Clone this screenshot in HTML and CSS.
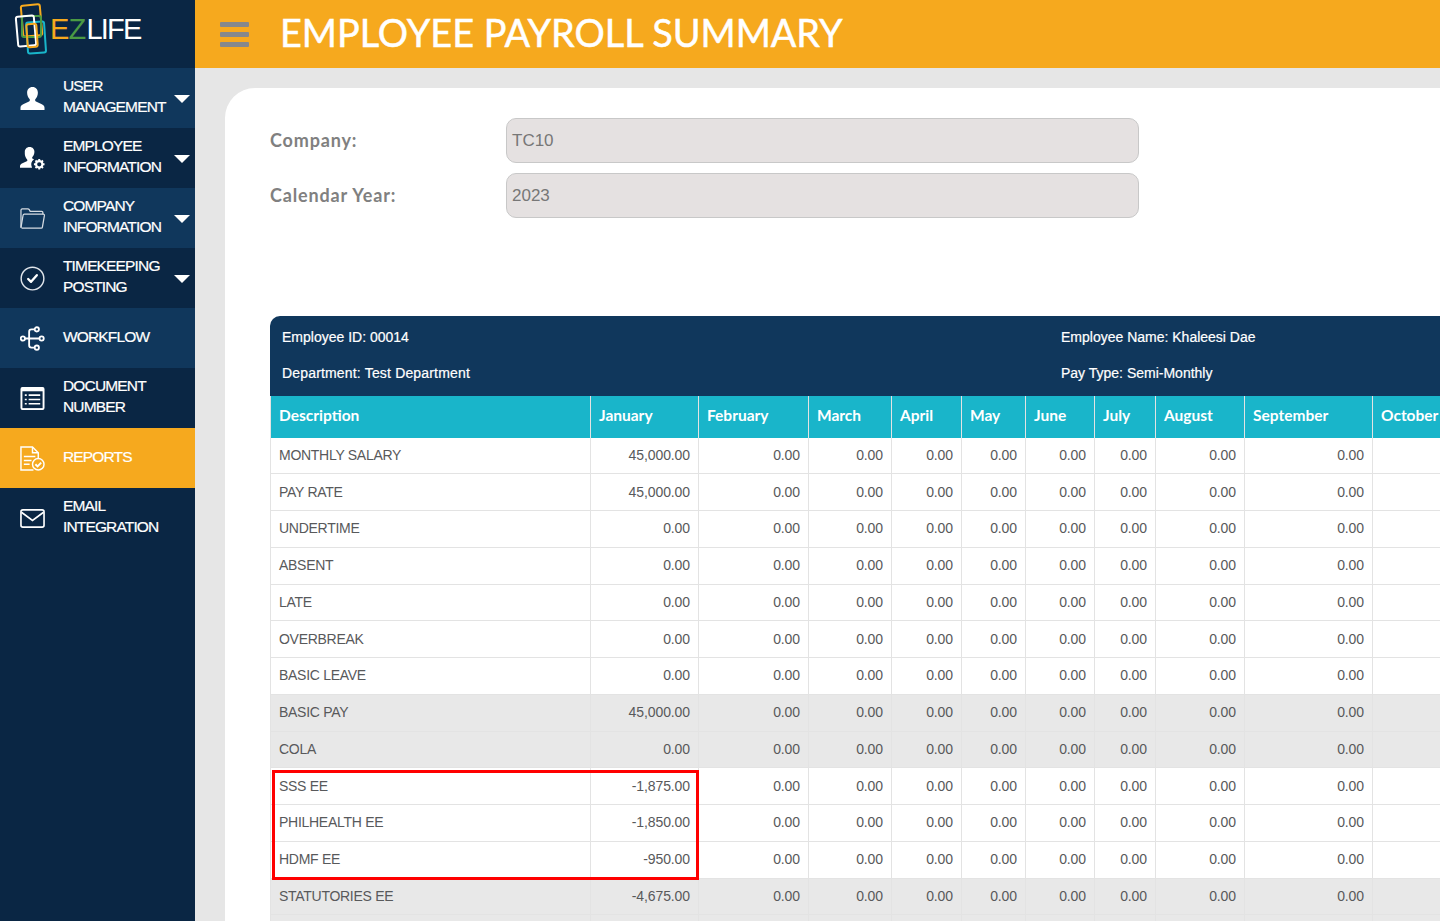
FILE: index.html
```html
<!DOCTYPE html>
<html lang="en">
<head>
<meta charset="utf-8">
<title>Employee Payroll Summary</title>
<link rel="stylesheet" href="styles.css">
</head>
<body>
<aside class="sidebar">
  <div class="brand">
    <svg class="brand-mark" width="46" height="56" viewBox="0 0 46 56" fill="none" stroke-width="2">
      <rect x="21" y="5" width="19" height="31" rx="2" stroke="#f6a91e" transform="rotate(-5 30 20)"/>
      <rect x="26" y="22" width="18" height="31" rx="2" stroke="#19b5ca" transform="rotate(-4 35 37)"/>
      <rect x="21" y="16" width="19" height="21" rx="2" stroke="#4b9a44"/>
      <rect x="16" y="16" width="18" height="30" rx="2" stroke="#ffffff" transform="rotate(-5 25 31)"/>
      <rect x="26" y="24" width="10" height="23" rx="2" stroke="#f6a91e" transform="rotate(-4 31 35)"/>
    </svg>
    <span class="brand-name"><span class="b-e">E</span><span class="b-z">Z</span>LIFE</span>
  </div>
  <nav>
    <a class="nav-item alt">
      <svg class="ico" viewBox="0 0 26 24"><path fill="#fff" d="M13 0c3.600 0 5.600 2.700 5.600 6 0 2.600-1 5-2.500 6.500-.6.700-.5 2 .5 2.500l5.600 2.700c2 .9 3.300 2 3.300 3.800V24H.5v-2.500c0-1.800 1.300-2.900 3.300-3.800L9.400 15c1-.5 1.100-1.800.5-2.500C8.400 11 7.400 8.600 7.400 6c0-3.300 2-6 5.600-6z"/></svg>
      <span class="label">USER MANAGEMENT</span><i class="caret"></i>
    </a>
    <a class="nav-item">
      <svg class="ico" viewBox="0 0 26 24"><path fill="#fff" d="M10 0c3.200 0 5 2.300 5 5 0 2.200-.9 4.200-2.100 5.400-.4.500-.4 1.500.4 1.900l1.300.6a7 7 0 0 0-2.100 8.600H0v-1.700c0-1.400 1-2.200 2.500-2.900l4.500-2c.8-.4.800-1.400.4-1.900C6 11.200 5 9.200 5 7c0-.4 0-1.300 0-2C5 2.300 6.800 0 10 0z"/><circle cx="20" cy="18" r="3.300" fill="none" stroke="#fff" stroke-width="2.200"/><path stroke="#fff" stroke-width="2" d="M20 12.500v2M20 21.500v2M14.500 18h2M23.500 18h2M16.100 14.100l1.400 1.400M22.500 20.500l1.400 1.400M16.100 21.900l1.400-1.400M22.500 15.500l1.400-1.400"/></svg>
      <span class="label">EMPLOYEE INFORMATION</span><i class="caret"></i>
    </a>
    <a class="nav-item alt">
      <svg class="ico" viewBox="0 0 26 24" fill="none" stroke="#d5dbe2" stroke-width="1.300"><path d="M1 21.500V3.500C1 2.700 1.500 2 2.300 2h6c.6 0 1 .3 1.300.8l1 1.700h12c.8 0 1.200.6 1.200 1.300v1.700"/><path d="M1 21.500 3.200 8.600c.1-.7.600-1.100 1.300-1.100h19.700c.8 0 1.300.6 1.200 1.300L23.300 21c-.1.700-.6 1.100-1.300 1.100H1.600"/></svg>
      <span class="label">COMPANY INFORMATION</span><i class="caret"></i>
    </a>
    <a class="nav-item">
      <svg class="ico" viewBox="0 0 26 26" fill="none" stroke="#fff"><circle cx="13" cy="13" r="11.800" stroke="#dfe4ea" stroke-width="1.500"/><path stroke-width="2.400" stroke-linecap="round" stroke-linejoin="round" d="M8.500 13.500l3 3 6-7"/></svg>
      <span class="label">TIMEKEEPING POSTING</span><i class="caret"></i>
    </a>
    <a class="nav-item alt">
      <svg class="ico" viewBox="0 0 26 26" fill="none" stroke="#fff" stroke-width="1.900"><circle cx="3" cy="13" r="2.200"/><circle cx="17.500" cy="3.500" r="2.200"/><circle cx="22.500" cy="13" r="2.200"/><circle cx="17.500" cy="22.500" r="2.200"/><path d="M5.200 13h15M9.500 13V6c0-1.500 1-2.500 2.500-2.500h3.300M9.500 13v7c0 1.500 1 2.500 2.500 2.500h3.300"/></svg>
      <span class="label">WORKFLOW</span>
    </a>
    <a class="nav-item">
      <svg class="ico" viewBox="0 0 26 26"><rect x="0.500" y="1" width="25" height="24" rx="2" fill="#fff"/><rect x="2.500" y="5.500" width="21" height="17.500" fill="#0a2644"/><path stroke="#fff" stroke-width="1.700" d="M5 9.500h2M9 9.500h12M5 14h2M9 14h12M5 18.500h2M9 18.500h12"/></svg>
      <span class="label">DOCUMENT NUMBER</span>
    </a>
    <a class="nav-item active">
      <svg class="ico" viewBox="0 0 26 26" fill="none" stroke="#fff" stroke-width="1.500"><path d="M14 25H1V1h12l6 6v6"/><path d="M13 1v6h6"/><path d="M4 11h12M4 15h8M4 19h6"/><circle cx="19" cy="19" r="6" fill="#f6a91e"/><path stroke-width="2" d="M16 19l2.300 2.300 3.700-4"/></svg>
      <span class="label">REPORTS</span>
    </a>
    <a class="nav-item">
      <svg class="ico" viewBox="0 0 26 20" fill="none" stroke="#fff" stroke-width="1.700"><rect x="1" y="1" width="24" height="18" rx="2"/><path d="M1.500 3.500 13 12 24.500 3.500"/></svg>
      <span class="label">EMAIL INTEGRATION</span>
    </a>
  </nav>
</aside>
<div class="main">
  <header class="topbar">
    <div class="burger"><span></span><span></span><span></span></div>
    <h1>EMPLOYEE PAYROLL SUMMARY</h1>
  </header>
  <div class="content">
    <section class="card">
      <form class="filters">
        <label>Company:</label><div class="field">TC10</div>
        <label>Calendar Year:</label><div class="field">2023</div>
      </form>
      <div class="summary">
        <div class="info">
          <div>Employee ID: 00014</div><div>Employee Name: Khaleesi Dae</div>
          <div class="wide">Department: Test Department</div><div>Pay Type: Semi-Monthly</div>
        </div>
        <table>
          <colgroup>
            <col class="c-desc"><col class="c-jan"><col class="c-feb"><col class="c-mar"><col class="c-apr"><col class="c-may"><col class="c-jun"><col class="c-jul"><col class="c-aug"><col class="c-sep"><col class="c-oct">
          </colgroup>
          <thead>
            <tr><th>Description</th><th>January</th><th>February</th><th>March</th><th>April</th><th>May</th><th>June</th><th>July</th><th>August</th><th>September</th><th>October</th></tr>
          </thead>
          <tbody>
            <tr><td>MONTHLY SALARY</td><td>45,000.00</td><td>0.00</td><td>0.00</td><td>0.00</td><td>0.00</td><td>0.00</td><td>0.00</td><td>0.00</td><td>0.00</td><td></td></tr>
            <tr><td>PAY RATE</td><td>45,000.00</td><td>0.00</td><td>0.00</td><td>0.00</td><td>0.00</td><td>0.00</td><td>0.00</td><td>0.00</td><td>0.00</td><td></td></tr>
            <tr><td>UNDERTIME</td><td>0.00</td><td>0.00</td><td>0.00</td><td>0.00</td><td>0.00</td><td>0.00</td><td>0.00</td><td>0.00</td><td>0.00</td><td></td></tr>
            <tr><td>ABSENT</td><td>0.00</td><td>0.00</td><td>0.00</td><td>0.00</td><td>0.00</td><td>0.00</td><td>0.00</td><td>0.00</td><td>0.00</td><td></td></tr>
            <tr><td>LATE</td><td>0.00</td><td>0.00</td><td>0.00</td><td>0.00</td><td>0.00</td><td>0.00</td><td>0.00</td><td>0.00</td><td>0.00</td><td></td></tr>
            <tr><td>OVERBREAK</td><td>0.00</td><td>0.00</td><td>0.00</td><td>0.00</td><td>0.00</td><td>0.00</td><td>0.00</td><td>0.00</td><td>0.00</td><td></td></tr>
            <tr><td>BASIC LEAVE</td><td>0.00</td><td>0.00</td><td>0.00</td><td>0.00</td><td>0.00</td><td>0.00</td><td>0.00</td><td>0.00</td><td>0.00</td><td></td></tr>
            <tr class="shade"><td>BASIC PAY</td><td>45,000.00</td><td>0.00</td><td>0.00</td><td>0.00</td><td>0.00</td><td>0.00</td><td>0.00</td><td>0.00</td><td>0.00</td><td></td></tr>
            <tr class="shade"><td>COLA</td><td>0.00</td><td>0.00</td><td>0.00</td><td>0.00</td><td>0.00</td><td>0.00</td><td>0.00</td><td>0.00</td><td>0.00</td><td></td></tr>
            <tr><td>SSS EE</td><td>-1,875.00</td><td>0.00</td><td>0.00</td><td>0.00</td><td>0.00</td><td>0.00</td><td>0.00</td><td>0.00</td><td>0.00</td><td></td></tr>
            <tr><td>PHILHEALTH EE</td><td>-1,850.00</td><td>0.00</td><td>0.00</td><td>0.00</td><td>0.00</td><td>0.00</td><td>0.00</td><td>0.00</td><td>0.00</td><td></td></tr>
            <tr><td>HDMF EE</td><td>-950.00</td><td>0.00</td><td>0.00</td><td>0.00</td><td>0.00</td><td>0.00</td><td>0.00</td><td>0.00</td><td>0.00</td><td></td></tr>
            <tr class="shade"><td>STATUTORIES EE</td><td>-4,675.00</td><td>0.00</td><td>0.00</td><td>0.00</td><td>0.00</td><td>0.00</td><td>0.00</td><td>0.00</td><td>0.00</td><td></td></tr>
            <tr class="shade"><td></td><td></td><td></td><td></td><td></td><td></td><td></td><td></td><td></td><td></td><td></td></tr>
          </tbody>
        </table>
        <div class="highlight"></div>
      </div>
    </section>
  </div>
</div>
</body>
</html>
```

FILE: styles.css
```css
* { box-sizing: border-box; }
html, body { height: 100%; }
body {
  margin: 0;
  height: 921px;
  overflow: hidden;
  display: flex;
  font-family: "Liberation Sans", Arial, sans-serif;
  background: #e6e6e6;
}

/* Sidebar */
.sidebar {
  flex: 0 0 195px;
  background: #0a2644;
  color: #fff;
}
.brand {
  height: 68px;
  display: flex;
  align-items: flex-start;
  padding-left: 1px;
}
.brand-mark { flex: none; }
.brand-name {
  font-size: 29px;
  line-height: 1;
  margin-left: 3px;
  margin-top: 15px;
  letter-spacing: -1.8px;
}
.b-e { color: #f6a91e; margin-right: 1px; }
.b-z { color: #4b9a44; margin-right: 2px; }
.nav-item {
  position: relative;
  height: 60px;
  display: flex;
  align-items: center;
  padding-left: 20px;
  color: #fff;
}
.nav-item.alt { background: #10375c; }
.nav-item.active { background: #f6a91e; }
.ico { flex: none; width: 25px; height: 25px; margin-right: 18px; }
.label {
  width: 112px;
  padding-bottom: 4px;
  font-size: 15.500px;
  line-height: 21px;
  letter-spacing: -.85px;
  -webkit-text-stroke: .2px #fff;
}
.caret {
  position: absolute;
  right: 5px;
  top: 27px;
  width: 0;
  height: 0;
  border-left: 8px solid transparent;
  border-right: 8px solid transparent;
  border-top: 8px solid #fff;
}

/* Main */
.main {
  flex: 1 1 0;
  min-width: 0;
  display: flex;
  flex-direction: column;
}
.topbar {
  flex: none;
  height: 68px;
  background: #f6a91e;
  display: flex;
  align-items: center;
  padding-left: 25px;
}
.burger {
  width: 29px;
  display: flex;
  flex-direction: column;
  gap: 5px;
  margin-right: 31px;
}
.burger span {
  height: 5px;
  background: #85888c;
  border-radius: 1px;
}
h1 {
  margin: -3px 0 0;
  color: #fff;
  font-family: Lato, sans-serif;
  font-weight: 400;
  font-size: 37.850px;
  line-height: 1;
  white-space: nowrap;
  -webkit-text-stroke: .5px #fff;
}
.content {
  flex: 1;
  min-height: 0;
  padding: 20px 0 0 30px;
  overflow: hidden;
}
.card {
  background: #fff;
  border-radius: 30px 0 0 0;
  height: 100%;
  padding: 30px 0 0 45px;
  overflow: hidden;
}
.filters {
  display: grid;
  grid-template-columns: 236px 633px;
  row-gap: 10px;
  align-items: center;
}
.filters label {
  padding-bottom: 2px;
  font-family: Lato, sans-serif;
  font-weight: 700;
  font-size: 18px;
  letter-spacing: .85px;
  color: #808080;
}
.field {
  height: 45px;
  padding: 0 5px;
  display: flex;
  align-items: center;
  background: #e5e1e1;
  border: 1px solid #c8c8c8;
  border-radius: 10px;
  font-size: 17px;
  color: #777;
}

/* Summary table */
.summary {
  position: relative;
  margin-top: 98px;
  width: 1212px;
}
.info {
  height: 80px;
  padding: 3px 0 5px 12px;
  background: #10375c;
  border-radius: 10px 0 0 0;
  color: #fff;
  display: grid;
  grid-template-columns: 779px 1fr;
  grid-auto-rows: 36px;
  align-items: center;
  font-size: 14px;
  -webkit-text-stroke: .2px #fff;
}
.info .wide { letter-spacing: .17px; }
table {
  table-layout: fixed;
  width: 1212px;
  border-collapse: separate;
  border-spacing: 0;
  font-size: 14px;
  color: #58595b;
}
.c-desc { width: 320px; }
.c-jan { width: 108px; }
.c-feb { width: 110px; }
.c-mar { width: 83px; }
.c-apr { width: 70px; }
.c-may { width: 64px; }
.c-jun { width: 69px; }
.c-jul { width: 61px; }
.c-aug { width: 89px; }
.c-sep { width: 128px; }
.c-oct { width: 110px; }
th {
  height: 41.500px;
  padding: 0 8px 3px;
  background: #19b5ca;
  color: #fff;
  font-family: Lato, sans-serif;
  font-weight: 700;
  font-size: 15.500px;
  text-align: left;
  white-space: nowrap;
  border-left: 1px solid #e3e3e3;
}
td {
  height: 36.750px;
  padding: 0 8px 1px;
  text-align: right;
  letter-spacing: -.1px;
  border-left: 1px solid #e3e3e3;
  border-bottom: 1px solid #e3e3e3;
}
td:first-child { text-align: left; letter-spacing: -.28px; }
.shade td { background: #e8e8e8; }
.highlight {
  position: absolute;
  left: 2px;
  top: 454px;
  width: 427px;
  height: 110px;
  border: 3px solid #ff0000;
}
```
